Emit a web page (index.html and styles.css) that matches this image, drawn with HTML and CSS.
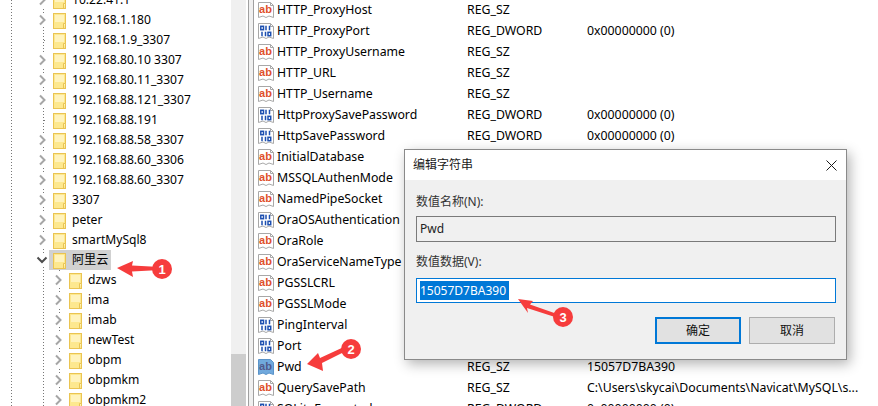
FILE: index.html
```html
<!DOCTYPE html>
<html lang="zh-CN">
<head>
<meta charset="utf-8">
<title>编辑字符串</title>
<link rel="stylesheet" href="styles.css">
</head>
<body>
<svg class="defs" width="0" height="0" aria-hidden="true">
  <symbol id="chev" viewBox="0 0 9 12"><path d="M2 1.500 6.500 6 2 10.500" fill="none" stroke="#a6a6a6" stroke-width="2"/></symbol>
  <symbol id="chevd" viewBox="0 0 12 9"><path d="M1.500 2 6 6.500 10.500 2" fill="none" stroke="#4d4d4d" stroke-width="2"/></symbol>
  <symbol id="folder" viewBox="0 0 13 16">
    <rect x=".5" y=".5" width="12" height="15" fill="#fde88f" stroke="#eac452"/>
    <rect x="2" y="2" width="9" height="7" fill="#fff3bd"/>
    <path d="M10.500 15V10.500H12.500" fill="#fff3bd" stroke="#eac452"/>
  </symbol>
  <symbol id="page" viewBox="0 0 16 16">
    <path d="M.5 .5H12.500L15.500 3.500V15.500L11 14 8 15.500 5 14 .5 15.500Z" fill="#fff" stroke="#a8a8a8"/>
    <path d="M12.500 .5V3.500H15.500" fill="none" stroke="#a8a8a8"/>
  </symbol>
  <symbol id="bin" viewBox="0 0 16 16">
    <use href="#page" width="16" height="16"/>
    <g fill="none" stroke="#1c4fb0" stroke-width="1.500">
      <rect x="2.800" y="3.300" width="2.700" height="3.400"/><path d="M8 2.800V7.200M11.500 2.800V7.200"/>
      <path d="M4 8.800V13.200M7.500 8.800V13.200"/><rect x="10" y="9.300" width="2.700" height="3.400"/>
    </g>
  </symbol>
</svg>

<div class="window">
  <nav class="tree">
    <div class="row"><svg class="chev"><use href="#chev"/></svg><div class="node"><svg class="folder"><use href="#folder"/></svg><span>10.22.41.1</span></div></div>
    <div class="row"><svg class="chev"><use href="#chev"/></svg><div class="node"><svg class="folder"><use href="#folder"/></svg><span>192.168.1.180</span></div></div>
    <div class="row"><i class="leaf"></i><div class="node"><svg class="folder"><use href="#folder"/></svg><span>192.168.1.9_3307</span></div></div>
    <div class="row"><svg class="chev"><use href="#chev"/></svg><div class="node"><svg class="folder"><use href="#folder"/></svg><span>192.168.80.10 3307</span></div></div>
    <div class="row"><svg class="chev"><use href="#chev"/></svg><div class="node"><svg class="folder"><use href="#folder"/></svg><span>192.168.80.11_3307</span></div></div>
    <div class="row"><svg class="chev"><use href="#chev"/></svg><div class="node"><svg class="folder"><use href="#folder"/></svg><span>192.168.88.121_3307</span></div></div>
    <div class="row"><i class="leaf"></i><div class="node"><svg class="folder"><use href="#folder"/></svg><span>192.168.88.191</span></div></div>
    <div class="row"><svg class="chev"><use href="#chev"/></svg><div class="node"><svg class="folder"><use href="#folder"/></svg><span>192.168.88.58_3307</span></div></div>
    <div class="row"><svg class="chev"><use href="#chev"/></svg><div class="node"><svg class="folder"><use href="#folder"/></svg><span>192.168.88.60_3306</span></div></div>
    <div class="row"><svg class="chev"><use href="#chev"/></svg><div class="node"><svg class="folder"><use href="#folder"/></svg><span>192.168.88.60_3307</span></div></div>
    <div class="row"><svg class="chev"><use href="#chev"/></svg><div class="node"><svg class="folder"><use href="#folder"/></svg><span>3307</span></div></div>
    <div class="row"><svg class="chev"><use href="#chev"/></svg><div class="node"><svg class="folder"><use href="#folder"/></svg><span>peter</span></div></div>
    <div class="row"><svg class="chev"><use href="#chev"/></svg><div class="node"><svg class="folder"><use href="#folder"/></svg><span>smartMySql8</span></div></div>
    <div class="row"><svg class="chev open"><use href="#chevd"/></svg><div class="node selected"><svg class="folder"><use href="#folder"/></svg><span>阿里云</span></div></div>
    <div class="children">
      <div class="row"><svg class="chev"><use href="#chev"/></svg><div class="node"><svg class="folder"><use href="#folder"/></svg><span>dzws</span></div></div>
      <div class="row"><svg class="chev"><use href="#chev"/></svg><div class="node"><svg class="folder"><use href="#folder"/></svg><span>ima</span></div></div>
      <div class="row"><svg class="chev"><use href="#chev"/></svg><div class="node"><svg class="folder"><use href="#folder"/></svg><span>imab</span></div></div>
      <div class="row"><svg class="chev"><use href="#chev"/></svg><div class="node"><svg class="folder"><use href="#folder"/></svg><span>newTest</span></div></div>
      <div class="row"><svg class="chev"><use href="#chev"/></svg><div class="node"><svg class="folder"><use href="#folder"/></svg><span>obpm</span></div></div>
      <div class="row"><svg class="chev"><use href="#chev"/></svg><div class="node"><svg class="folder"><use href="#folder"/></svg><span>obpmkm</span></div></div>
      <div class="row"><svg class="chev"><use href="#chev"/></svg><div class="node"><svg class="folder"><use href="#folder"/></svg><span>obpmkm2</span></div></div>
    </div>
  </nav>
  <div class="scrollbar"><div class="thumb"></div></div>
  <div class="splitter"></div>
  <main class="list">
    <div class="item"><svg class="ico"><use href="#page"/><text class="ab" x="7.500" y="10.500">ab</text></svg><span class="name">HTTP_ProxyHost</span><span class="type">REG_SZ</span><span></span></div>
    <div class="item"><svg class="ico"><use href="#bin"/></svg><span class="name">HTTP_ProxyPort</span><span class="type">REG_DWORD</span><span>0x00000000 (0)</span></div>
    <div class="item"><svg class="ico"><use href="#page"/><text class="ab" x="7.500" y="10.500">ab</text></svg><span class="name">HTTP_ProxyUsername</span><span class="type">REG_SZ</span><span></span></div>
    <div class="item"><svg class="ico"><use href="#page"/><text class="ab" x="7.500" y="10.500">ab</text></svg><span class="name">HTTP_URL</span><span class="type">REG_SZ</span><span></span></div>
    <div class="item"><svg class="ico"><use href="#page"/><text class="ab" x="7.500" y="10.500">ab</text></svg><span class="name">HTTP_Username</span><span class="type">REG_SZ</span><span></span></div>
    <div class="item"><svg class="ico"><use href="#bin"/></svg><span class="name">HttpProxySavePassword</span><span class="type">REG_DWORD</span><span>0x00000000 (0)</span></div>
    <div class="item"><svg class="ico"><use href="#bin"/></svg><span class="name">HttpSavePassword</span><span class="type">REG_DWORD</span><span>0x00000000 (0)</span></div>
    <div class="item"><svg class="ico"><use href="#page"/><text class="ab" x="7.500" y="10.500">ab</text></svg><span class="name">InitialDatabase</span></div>
    <div class="item"><svg class="ico"><use href="#page"/><text class="ab" x="7.500" y="10.500">ab</text></svg><span class="name">MSSQLAuthenMode</span></div>
    <div class="item"><svg class="ico"><use href="#page"/><text class="ab" x="7.500" y="10.500">ab</text></svg><span class="name">NamedPipeSocket</span></div>
    <div class="item"><svg class="ico"><use href="#bin"/></svg><span class="name">OraOSAuthentication</span></div>
    <div class="item"><svg class="ico"><use href="#page"/><text class="ab" x="7.500" y="10.500">ab</text></svg><span class="name">OraRole</span></div>
    <div class="item"><svg class="ico"><use href="#page"/><text class="ab" x="7.500" y="10.500">ab</text></svg><span class="name">OraServiceNameType</span></div>
    <div class="item"><svg class="ico"><use href="#page"/><text class="ab" x="7.500" y="10.500">ab</text></svg><span class="name">PGSSLCRL</span></div>
    <div class="item"><svg class="ico"><use href="#page"/><text class="ab" x="7.500" y="10.500">ab</text></svg><span class="name">PGSSLMode</span></div>
    <div class="item"><svg class="ico"><use href="#bin"/></svg><span class="name">PingInterval</span></div>
    <div class="item"><svg class="ico"><use href="#bin"/></svg><span class="name">Port</span></div>
    <div class="item"><svg class="ico"><path class="page-sel" d="M.5 .5H12.500L15.500 3.500V15.500L11 14 8 15.500 5 14 .5 15.500Z"/><text class="ab ab-sel" x="7.500" y="10.500">ab</text></svg><span class="name">Pwd</span><span class="type">REG_SZ</span><span>15057D7BA390</span></div>
    <div class="item"><svg class="ico"><use href="#page"/><text class="ab" x="7.500" y="10.500">ab</text></svg><span class="name">QuerySavePath</span><span class="type">REG_SZ</span><span>C:\Users\skycai\Documents\Navicat\MySQL\s...</span></div>
    <div class="item"><svg class="ico"><use href="#bin"/></svg><span class="name">SQLiteEncrypted</span><span class="type">REG_DWORD</span><span>0x00000000 (0)</span></div>
  </main>
</div>

<section class="dialog">
  <header class="dialog-title">
    <span>编辑字符串</span>
    <svg class="close" viewBox="0 0 11 11"><path d="M.5.500 10.500 10.500M10.500.500 .5 10.500" fill="none" stroke="#1a1a1a"/></svg>
  </header>
  <div class="dialog-body">
    <div class="label">数值名称(N):</div>
    <div class="field readonly">Pwd</div>
    <div class="label second">数值数据(V):</div>
    <div class="field active"><span class="sel">15057D7BA390</span></div>
    <div class="buttons">
      <div class="btn primary">确定</div>
      <div class="btn">取消</div>
    </div>
  </div>
</section>

<svg class="marks" width="878" height="406">
  <g class="mark">
    <path d="M117 268 133 261 132 265.500 160 267V270L132 271.500 133 277Z"/>
    <circle cx="162" cy="269" r="10"/>
    <path d="M307 364 318 353 320 358 346 346 348 350 322 363 323 371Z"/>
    <circle cx="351" cy="349" r="10"/>
    <path d="M518 299 533 301 530 304.500 560 315 558 318 527 308 528 313Z"/>
    <circle cx="563" cy="317" r="10"/>
  </g>
  <text class="num" x="162" y="274">1</text>
  <text class="num" x="351" y="354">2</text>
  <text class="num" x="563" y="322">3</text>
</svg>
</body>
</html>
```
FILE: styles.css
```css
* { box-sizing: border-box; }
html, body { margin: 0; height: 406px; overflow: hidden; background: #fff; }
body { font: 12px/16px "Noto Sans", "Noto Sans CJK SC", sans-serif; color: #000; position: relative; }
.defs { position: absolute; }

.window { display: flex; height: 406px; overflow: hidden; }

.tree {
  width: 231px; flex: none; height: 406px; overflow: hidden; font-size: 12.100px;
  background-image:
    repeating-linear-gradient(to bottom, #777 0 1px, transparent 1px 3px),
    repeating-linear-gradient(to bottom, #777 0 1px, transparent 1px 3px);
  background-size: 1px 100%, 1px 100%;
  background-position: 11px 0, 43px 0;
  background-repeat: no-repeat;
}
.tree > .row:first-child { margin-top: -10px; }
.row { display: flex; align-items: center; height: 20px; padding-left: 38px; }
.chev { width: 9px; height: 14px; background: #fff; flex: none; }
.chev.open { width: 12px; margin-left: -2px; margin-right: -1px; height: 12px; }
.leaf {
  width: 9px; height: 1px; flex: none;
  background: repeating-linear-gradient(to right, transparent 0 6px, #777 6px 7px, transparent 7px 8px);
}
.node { display: flex; align-items: center; gap: 6px; height: 20px; margin-left: 2px; padding: 0 3px 0 4px; }
.node.selected { background: #d1d1d1; }
.folder { width: 13px; height: 16px; flex: none; margin-top: 1px; }

.children {
  background-image: repeating-linear-gradient(to bottom, #777 0 1px, transparent 1px 3px);
  background-size: 1px 100%;
  background-position: 59px 0;
  background-repeat: no-repeat;
}
.children .row { padding-left: 54px; }

.scrollbar { width: 15px; flex: none; background: #f0f0f0; display: flex; flex-direction: column; justify-content: flex-end; }
.thumb { height: 52px; background: #cdcdcd; }
.splitter { width: 6px; flex: none; margin-left: 2px; background: #f0f0f0; border-left: 1px solid #a0a0a0; border-right: 1px solid #a0a0a0; }

.list { flex: 1; overflow: hidden; font-size: 12.300px; }
.item:first-child { margin-top: -1px; }
.item { display: grid; grid-template-columns: 15px 194px 120px 1fr; align-items: center; height: 21px; padding-left: 4px; white-space: nowrap; color: #000; }
.item .ico { width: 16px; height: 16px; }
.item .name { padding-left: 4px; }
.ab { font: bold 11px "Liberation Sans", sans-serif; fill: #e0502c; text-anchor: middle; }
.ab-sel { fill: #515a8c; }
.page-sel { fill: #70a9dd; stroke: #5a93c9; }

.dialog {
  position: absolute; left: 404px; top: 149px; width: 443px; height: 211px;
  background: #f0f0f0; border: 1px solid #8a8a8a;
  box-shadow: 3px 4px 12px rgba(0, 0, 0, .3);
  display: flex; flex-direction: column;
}
.dialog-title {
  height: 30px; flex: none; background: #fff; padding: 0 9px 0 8px;
  display: flex; align-items: center; justify-content: space-between; color: #1a1a1a;
}
.close { width: 11px; height: 11px; }
.dialog-body { padding: 14px 10px 0 11px; flex: 1; color: #333; }
.label { height: 16px; line-height: 16px; }
.label.second { margin-top: 12px; }
.field { height: 26px; margin-top: 6px; width: 420px; padding-left: 3px; display: flex; align-items: center; border: 1px solid #7a7a7a; color: #222; }
.field.active { height: 25px; background: #fff; border-color: #0078d7; margin-top: 8px; }
.sel { background: #0078d7; color: #fff; height: 19px; line-height: 19px; width: 89px; white-space: nowrap; }
.buttons { display: flex; gap: 8px; margin-top: 14px; padding-left: 239px; }
.btn { width: 86px; height: 27px; background: #e1e1e1; border: 1px solid #adadad; display: flex; align-items: center; justify-content: center; color: #111; }
.btn.primary { border: 2px solid #0078d7; }

.marks { position: absolute; left: 0; top: 0; }
.mark { fill: #f63c3c; }
.num { font: bold 13px "Liberation Sans", sans-serif; fill: #fff; text-anchor: middle; }
```
